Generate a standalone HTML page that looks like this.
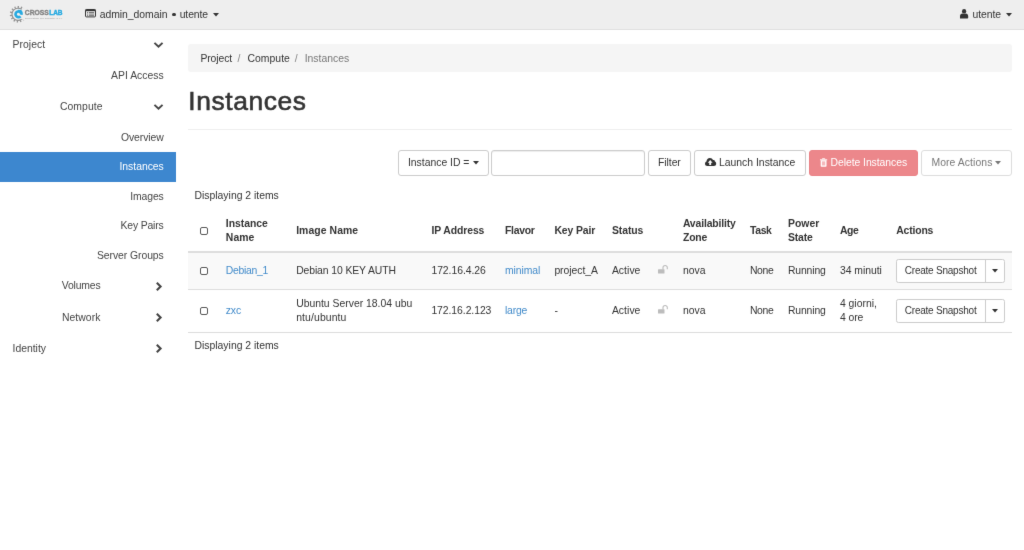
<!DOCTYPE html>
<html><head><meta charset="utf-8"><title>Instances</title>
<style>
*{box-sizing:border-box}
html,body{margin:0;padding:0}
body{width:1024px;height:550px;overflow:hidden;background:#fff;font-family:"Liberation Sans",sans-serif;font-size:10.4px;color:#333;position:relative}
.t{position:absolute;white-space:pre;line-height:14px;font-size:10.4px}
.b{position:absolute}
.btn{position:absolute;top:150.2px;height:25.6px;border:0.8px solid #ccc;border-radius:3px;background:#fff}
svg{position:absolute;overflow:visible}
.cb{position:absolute;width:8.4px;height:8.4px;border:1px solid #585858;border-radius:2px;background:#fff}
#wrap{background:#fff;position:absolute;left:0;top:0;width:1024px;height:550px;will-change:transform;filter:url(#soft)}
</style></head><body><svg width="0" height="0" style="position:absolute"><defs><filter id="soft" x="0" y="0" width="100%" height="100%" color-interpolation-filters="sRGB"><feConvolveMatrix order="3" kernelMatrix="0.008 0.062 0.008 0.062 0.72 0.062 0.008 0.062 0.008" edgeMode="duplicate" preserveAlpha="true"/></filter></defs></svg><div id="wrap">
<!-- top bar -->
<div class="b" style="left:0;top:0;width:1024px;height:29.7px;background:#eee;border-bottom:1.5px solid #dfdfdf"></div>
<!-- sidebar active -->
<div class="b" style="left:0;top:151.9px;width:176px;height:29.9px;background:#3d87cf"></div>
<!-- breadcrumb -->
<div class="b" style="left:188px;top:44px;width:824px;height:27.6px;background:#f5f5f5;border-radius:3px"></div>
<!-- h1 -->
<div class="t" style="left:188.3px;top:86px;font-size:26.4px;line-height:30px;color:#333;-webkit-text-stroke:0.6px #333;letter-spacing:0.58px">Instances</div>
<div class="b" style="left:188px;top:129px;width:824px;height:1px;background:#eee"></div>
<!-- toolbar -->
<div class="btn" style="left:397.6px;width:91px"></div>
<div class="btn" style="left:491.2px;width:153.6px;box-shadow:inset 0 1px 1px rgba(0,0,0,.075)"></div>
<div class="btn" style="left:648.2px;width:42.6px"></div>
<div class="btn" style="left:694.4px;width:111.4px"></div>
<div class="btn" style="left:808.8px;width:109px;background:#ec878b;border-color:#ea8286"></div>
<div class="btn" style="left:921.4px;width:90.2px;border-color:#ddd"></div>
<!-- table -->
<div class="b" style="left:188px;top:251.2px;width:824px;height:1.6px;background:#ddd"></div>
<div class="b" style="left:188px;top:252.8px;width:824px;height:36.4px;background:#f9f9f9"></div>
<div class="b" style="left:188px;top:289px;width:824px;height:0.8px;background:#ddd"></div>
<div class="b" style="left:188px;top:332px;width:824px;height:0.8px;background:#ddd"></div>
<div class="cb" style="left:199.6px;top:226.7px"></div>
<div class="cb" style="left:199.6px;top:266.5px"></div>
<div class="cb" style="left:199.6px;top:306.6px"></div>
<!-- action buttons -->
<div class="b" style="left:896.2px;top:259.2px;width:108.6px;height:23.6px;border:0.8px solid #ccc;border-radius:2.4px;background:#fff"></div>
<div class="b" style="left:985px;top:259.2px;width:0.8px;height:23.6px;background:#ccc"></div>
<div class="b" style="left:896.2px;top:299.2px;width:108.6px;height:23.6px;border:0.8px solid #ccc;border-radius:2.4px;background:#fff"></div>
<div class="b" style="left:985px;top:299.2px;width:0.8px;height:23.6px;background:#ccc"></div>
<!-- logo -->
<svg style="left:0;top:0" width="70" height="30" viewBox="0 0 70 30">
  <g transform="translate(18.1,14.3)">
    <circle r="7.1" fill="none" stroke="#909090" stroke-width="2.4" stroke-dasharray="1.2 1.9" transform="rotate(40)"/>
    <path d="M3.6,-4.9 A6.1,6.1 0 1 0 3.6,4.9" fill="none" stroke="#909090" stroke-width="1.1"/>
    <path d="M6.6,-6.4 L9.5,-3 L9.5,3 L6.6,6.2 L3.2,4.4 L3.2,-4.4 Z" fill="#eee"/>
    <g transform="translate(0.35,0)"><path d="M2.09,2.01 A2.90,2.90 0 1 1 2.88,0.30" fill="none" stroke="#27aae1" stroke-width="2.7"/>
    <path d="M-0.6,-4.6 L2.9,-4.35 L4.1,-2.2 L4.1,0.5 L2.4,0.2 Z" fill="#27aae1"/></g>
  </g>
  <text x="24.8" y="15.3" font-family="Liberation Sans, sans-serif" font-weight="bold" font-size="6.9" fill="#828282" textLength="24.1" lengthAdjust="spacingAndGlyphs" stroke="#828282" stroke-width="0.32">CROSS</text>
  <text x="49.2" y="15.3" font-family="Liberation Sans, sans-serif" font-weight="bold" font-size="6.9" fill="#27aae1" textLength="13.4" lengthAdjust="spacingAndGlyphs" stroke="#27aae1" stroke-width="0.45">LAB</text>
  <text x="24.9" y="18.7" font-family="Liberation Sans, sans-serif" font-size="2.4" fill="#9c9c9c" textLength="37.4" lengthAdjust="spacingAndGlyphs">innovation for industry s.r.l.</text>
</svg>
<!-- list-alt icon -->
<svg style="left:84.6px;top:9.4px" width="11" height="8.4" viewBox="0 0 11 8.4">
  <rect x="0.5" y="0.5" width="10" height="7.4" rx="0.9" fill="#eee" stroke="#333" stroke-width="1"/>
  <rect x="0.5" y="0.5" width="10" height="1.7" fill="#333"/>
  <rect x="2" y="3.1" width="1.1" height="0.9" fill="#666"/><rect x="3.9" y="3.1" width="5.2" height="0.9" fill="#666"/>
  <rect x="2" y="4.6" width="1.1" height="0.9" fill="#666"/><rect x="3.9" y="4.6" width="5.2" height="0.9" fill="#666"/>
  <rect x="2" y="6.0" width="1.1" height="0.8" fill="#666"/><rect x="3.9" y="6.0" width="5.2" height="0.8" fill="#666"/>
</svg>
<!-- carets -->
<svg style="left:213.1px;top:12.7px" width="6" height="3.5" viewBox="0 0 5.6 3.1"><path d="M0,0H5.6L2.8,3.1Z" fill="#333"/></svg>
<svg style="left:1005.5px;top:12.7px" width="6" height="3.5" viewBox="0 0 5.6 3.1"><path d="M0,0H5.6L2.8,3.1Z" fill="#333"/></svg>
<svg style="left:472.6px;top:161.3px" width="6" height="3.5" viewBox="0 0 5.6 3.1"><path d="M0,0H5.6L2.8,3.1Z" fill="#333"/></svg>
<svg style="left:995.3px;top:161.3px" width="6" height="3.5" viewBox="0 0 5.6 3.1"><path d="M0,0H5.6L2.8,3.1Z" fill="#777"/></svg>
<svg style="left:991.8px;top:269.4px" width="6" height="3.5" viewBox="0 0 5.6 3.1"><path d="M0,0H5.6L2.8,3.1Z" fill="#333"/></svg>
<svg style="left:991.8px;top:309.1px" width="6" height="3.5" viewBox="0 0 5.6 3.1"><path d="M0,0H5.6L2.8,3.1Z" fill="#333"/></svg>
<div class="b" style="left:172px;top:12.8px;width:3.5px;height:3.5px;border-radius:50%;background:#333"></div>
<!-- user icon -->
<svg style="left:960.4px;top:9px" width="8.2" height="9.4" viewBox="0 0 8.2 9.4">
  <ellipse cx="4.1" cy="2.4" rx="2.15" ry="2.4" fill="#333"/>
  <path d="M0,9.4 V7.2 C0,5.3 1.2,4.5 2.4,4.4 C3.4,5.2 4.8,5.2 5.8,4.4 C7,4.5 8.2,5.3 8.2,7.2 V8.4 C8.2,9 7.8,9.4 7.2,9.4 Z" fill="#333"/>
</svg>
<!-- chevrons down -->
<svg style="left:154.1px;top:42px" width="9" height="5.9" viewBox="0 0 9 5.9"><path d="M0.45,0.85 L4.5,4.75 L8.55,0.85" fill="none" stroke="#444" stroke-width="1.95"/></svg>
<svg style="left:154.1px;top:103.8px" width="9" height="5.9" viewBox="0 0 9 5.9"><path d="M0.45,0.85 L4.5,4.75 L8.55,0.85" fill="none" stroke="#444" stroke-width="1.95"/></svg>
<!-- chevrons right -->
<svg style="left:155.6px;top:281.5px" width="5.9" height="9" viewBox="0 0 5.9 9"><path d="M0.8,0.7 L4.6,4.5 L0.8,8.3" fill="none" stroke="#444" stroke-width="2.1"/></svg>
<svg style="left:155.6px;top:312.8px" width="5.9" height="9" viewBox="0 0 5.9 9"><path d="M0.8,0.7 L4.6,4.5 L0.8,8.3" fill="none" stroke="#444" stroke-width="2.1"/></svg>
<svg style="left:155.6px;top:344px" width="5.9" height="9" viewBox="0 0 5.9 9"><path d="M0.8,0.7 L4.6,4.5 L0.8,8.3" fill="none" stroke="#444" stroke-width="2.1"/></svg>
<!-- cloud upload -->
<svg style="left:704.6px;top:158px" width="11.2" height="8" viewBox="0 0 11.2 8">
  <path d="M2.4,8 C1,8 0,7 0,5.7 C0,4.7 0.7,3.9 1.5,3.6 C1.5,1.6 3,0 4.9,0 C6.3,0 7.5,0.8 8,2.1 C8.3,2 8.5,1.9 8.8,2 C9.6,2.1 10,2.8 9.9,3.6 C10.7,4 11.2,4.8 11.2,5.7 C11.2,7 10.2,8 8.9,8 Z" fill="#333"/>
  <path d="M5.2,2.1 L7.6,4.8 H6.15 V7.1 H4.25 V4.8 H2.8 Z" fill="#fff"/>
</svg>
<!-- trash -->
<svg style="left:819.5px;top:157.9px" width="7.2" height="8.8" viewBox="0 0 7.4 8.9">
  <path d="M2.5,1.3 V0.5 H4.9 V1.3" fill="none" stroke="#fff" stroke-width="0.8"/>
  <rect x="0" y="1.3" width="7.4" height="1" fill="#fff"/>
  <path d="M0.7,2.3 H6.7 V8.2 C6.7,8.6 6.4,8.9 6,8.9 H1.4 C1,8.9 0.7,8.6 0.7,8.2 Z" fill="#fff"/>
  <rect x="2" y="3.4" width="3.4" height="4.2" fill="#f4b8ba"/>
</svg>
<!-- unlock icons -->
<svg style="left:658.2px;top:265.2px" width="10" height="8.6" viewBox="0 0 10 8.6">
  <rect x="0" y="4.2" width="6.5" height="4.2" rx="0.5" fill="#bcbcbc"/>
  <path d="M5,4.4 V2.6 A2.15,2.15 0 0 1 9.3,2.6 V4.2" fill="none" stroke="#bcbcbc" stroke-width="1.1"/>
</svg>
<svg style="left:658.2px;top:304.9px" width="10" height="8.6" viewBox="0 0 10 8.6">
  <rect x="0" y="4.2" width="6.5" height="4.2" rx="0.5" fill="#bcbcbc"/>
  <path d="M5,4.4 V2.6 A2.15,2.15 0 0 1 9.3,2.6 V4.2" fill="none" stroke="#bcbcbc" stroke-width="1.1"/>
</svg>

<span class="t" style="left:99.65px;top:8.00px;color:#333;letter-spacing:-0.029px;">admin_domain</span>
<span class="t" style="left:179.65px;top:8.00px;color:#333;letter-spacing:-0.088px;">utente</span>
<span class="t" style="left:972.60px;top:8.00px;color:#333;letter-spacing:-0.098px;">utente</span>
<span class="t" style="left:12.50px;top:38.00px;color:#444;letter-spacing:0.043px;">Project</span>
<span class="t" style="left:111.10px;top:69.00px;color:#444;">API Access</span>
<span class="t" style="left:59.90px;top:100.00px;color:#444;letter-spacing:0.071px;">Compute</span>
<span class="t" style="left:120.90px;top:131.00px;color:#444;letter-spacing:-0.059px;">Overview</span>
<span class="t" style="left:119.50px;top:160.00px;color:#fff;letter-spacing:-0.023px;">Instances</span>
<span class="t" style="left:130.20px;top:190.00px;color:#444;letter-spacing:-0.096px;">Images</span>
<span class="t" style="left:120.50px;top:219.00px;color:#444;letter-spacing:-0.146px;">Key Pairs</span>
<span class="t" style="left:96.90px;top:249.00px;color:#444;letter-spacing:-0.057px;">Server Groups</span>
<span class="t" style="left:61.80px;top:279.00px;color:#444;letter-spacing:-0.177px;">Volumes</span>
<span class="t" style="left:61.90px;top:311.00px;color:#444;letter-spacing:0.065px;">Network</span>
<span class="t" style="left:12.50px;top:342.00px;color:#444;">Identity</span>
<span class="t" style="left:200.40px;top:52.00px;color:#333;letter-spacing:-0.099px;">Project</span>
<span class="t" style="left:237.40px;top:52.00px;color:#858585;">/</span>
<span class="t" style="left:247.40px;top:52.00px;color:#333;letter-spacing:0.055px;">Compute</span>
<span class="t" style="left:294.65px;top:52.00px;color:#858585;">/</span>
<span class="t" style="left:304.65px;top:52.00px;color:#777;">Instances</span>
<span class="t" style="left:407.90px;top:156.00px;color:#333;">Instance ID =</span>
<span class="t" style="left:658.10px;top:156.00px;color:#333;letter-spacing:-0.079px;">Filter</span>
<span class="t" style="left:719.00px;top:156.00px;color:#333;">Launch Instance</span>
<span class="t" style="left:830.50px;top:156.00px;color:#fff;letter-spacing:-0.054px;">Delete Instances</span>
<span class="t" style="left:931.40px;top:156.00px;color:#777;letter-spacing:0.085px;">More Actions</span>
<span class="t" style="left:194.50px;top:189.00px;color:#333;">Displaying 2 items</span>
<span class="t" style="left:194.50px;top:339.00px;color:#333;">Displaying 2 items</span>
<span class="t" style="left:225.80px;top:217.00px;color:#333;font-weight:bold;letter-spacing:-0.022px;">Instance</span>
<span class="t" style="left:225.80px;top:231.00px;color:#333;font-weight:bold;letter-spacing:0.096px;">Name</span>
<span class="t" style="left:296.15px;top:224.00px;color:#333;font-weight:bold;letter-spacing:0.087px;">Image Name</span>
<span class="t" style="left:431.40px;top:224.00px;color:#333;font-weight:bold;letter-spacing:-0.080px;">IP Address</span>
<span class="t" style="left:504.90px;top:224.00px;color:#333;font-weight:bold;letter-spacing:-0.237px;">Flavor</span>
<span class="t" style="left:554.40px;top:224.00px;color:#333;font-weight:bold;letter-spacing:-0.085px;">Key Pair</span>
<span class="t" style="left:611.90px;top:224.00px;color:#333;font-weight:bold;letter-spacing:-0.053px;">Status</span>
<span class="t" style="left:682.90px;top:217.00px;color:#333;font-weight:bold;letter-spacing:-0.135px;">Availability</span>
<span class="t" style="left:682.90px;top:231.00px;color:#333;font-weight:bold;letter-spacing:-0.109px;">Zone</span>
<span class="t" style="left:749.90px;top:224.00px;color:#333;font-weight:bold;letter-spacing:-0.307px;">Task</span>
<span class="t" style="left:787.90px;top:217.00px;color:#333;font-weight:bold;letter-spacing:0.078px;">Power</span>
<span class="t" style="left:787.90px;top:231.00px;color:#333;font-weight:bold;letter-spacing:-0.105px;">State</span>
<span class="t" style="left:839.90px;top:224.00px;color:#333;font-weight:bold;letter-spacing:-0.320px;">Age</span>
<span class="t" style="left:896.20px;top:224.00px;color:#333;font-weight:bold;letter-spacing:-0.152px;">Actions</span>
<span class="t" style="left:225.65px;top:264.00px;color:#428bca;letter-spacing:-0.250px;">Debian_1</span>
<span class="t" style="left:296.15px;top:264.00px;color:#333;letter-spacing:-0.101px;">Debian 10 KEY AUTH</span>
<span class="t" style="left:431.40px;top:264.00px;color:#333;letter-spacing:-0.041px;">172.16.4.26</span>
<span class="t" style="left:504.90px;top:264.00px;color:#428bca;letter-spacing:-0.049px;">minimal</span>
<span class="t" style="left:554.40px;top:264.00px;color:#333;letter-spacing:-0.051px;">project_A</span>
<span class="t" style="left:611.90px;top:264.00px;color:#333;letter-spacing:0.041px;">Active</span>
<span class="t" style="left:682.90px;top:264.00px;color:#333;">nova</span>
<span class="t" style="left:749.90px;top:264.00px;color:#333;letter-spacing:-0.281px;">None</span>
<span class="t" style="left:787.90px;top:264.00px;color:#333;letter-spacing:-0.120px;">Running</span>
<span class="t" style="left:839.90px;top:264.00px;color:#333;letter-spacing:-0.021px;">34 minuti</span>
<span class="t" style="left:904.80px;top:264.00px;color:#333;font-size:10.0px;letter-spacing:-0.226px;">Create Snapshot</span>
<span class="t" style="left:225.65px;top:304.00px;color:#428bca;letter-spacing:-0.047px;">zxc</span>
<span class="t" style="left:296.15px;top:297.00px;color:#333;">Ubuntu Server 18.04 ubu</span>
<span class="t" style="left:296.15px;top:311.00px;color:#333;letter-spacing:0.125px;">ntu/ubuntu</span>
<span class="t" style="left:431.40px;top:304.00px;color:#333;letter-spacing:-0.061px;">172.16.2.123</span>
<span class="t" style="left:504.90px;top:304.00px;color:#428bca;letter-spacing:-0.152px;">large</span>
<span class="t" style="left:554.40px;top:304.00px;color:#333;">-</span>
<span class="t" style="left:611.90px;top:304.00px;color:#333;letter-spacing:0.041px;">Active</span>
<span class="t" style="left:682.90px;top:304.00px;color:#333;">nova</span>
<span class="t" style="left:749.90px;top:304.00px;color:#333;letter-spacing:-0.281px;">None</span>
<span class="t" style="left:787.90px;top:304.00px;color:#333;letter-spacing:-0.120px;">Running</span>
<span class="t" style="left:839.90px;top:297.00px;color:#333;">4 giorni,</span>
<span class="t" style="left:839.90px;top:311.00px;color:#333;letter-spacing:-0.047px;">4 ore</span>
<span class="t" style="left:904.80px;top:304.00px;color:#333;font-size:10.0px;letter-spacing:-0.226px;">Create Snapshot</span>
</div></body></html>
